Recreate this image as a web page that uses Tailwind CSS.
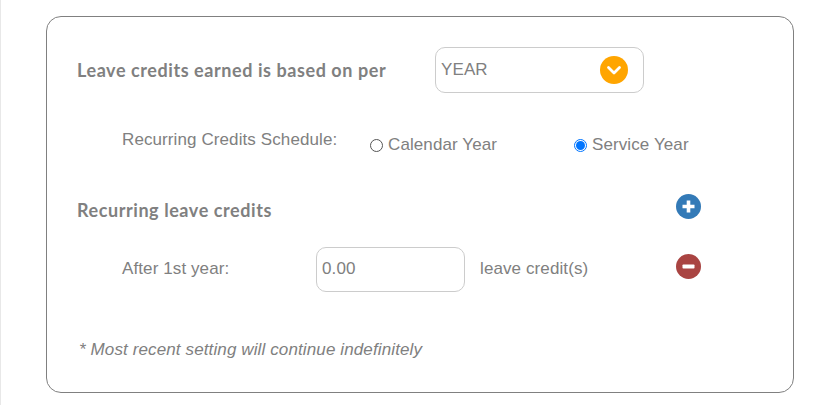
<!DOCTYPE html>
<html lang="en">
<head>
    <meta charset="UTF-8">
    <title>Leave credits</title>
    <script src="https://cdn.jsdelivr.net/npm/@tailwindcss/browser@4"></script>
</head>
<body class="bg-white h-[405px] overflow-hidden font-['Liberation_Sans',sans-serif] text-[#808080] text-[17px] tracking-[0.1px]">
    <div class="h-[405px] border-l border-[#e8e8e8] pl-[45px] pt-4">
        <div class="w-[748px] h-[377px] border border-[#808080] rounded-[15px] pl-[30px] flex flex-col">
            <!-- Base period -->
            <div class="flex items-center mt-[30px] h-[46px]">
                <h2 class="w-[358px] font-['Lato',sans-serif] font-bold text-[18px] tracking-[0.57px]">Leave credits earned is based on per</h2>
                <div class="w-[209px] h-[46px] border border-[#cccccc] rounded-[10px] pl-[5px] pr-[15px] flex items-center justify-between">
                    <span>YEAR</span>
                    <span class="w-7 h-7 rounded-full bg-[#ffa500] flex items-center justify-center">
                        <svg width="16" height="11" viewBox="0 0 16 11" fill="none" stroke="#fff" stroke-width="2.8" stroke-linecap="round" stroke-linejoin="round"><path d="M2.5 2.5 8 8l5.500-5.500"/></svg>
                    </span>
                </div>
            </div>

            <!-- Schedule -->
            <div class="flex mt-[34px] pl-[45px] h-6">
                <span class="w-[248px]">Recurring Credits Schedule:</span>
                <label class="w-[204px] flex items-center gap-[5px] mt-[8px] h-5"><span class="w-[13px] h-[13px] rounded-full border border-[#555555]"></span>Calendar Year</label>
                <label class="flex items-center gap-[5px] mt-[8px] h-5"><span class="w-[13px] h-[13px] rounded-full border border-[#0075ff] flex items-center justify-center"><span class="w-[9px] h-[9px] rounded-full bg-[#0075ff]"></span></span>Service Year</label>
            </div>

            <!-- Recurring credits header -->
            <div class="flex items-center justify-between mt-[41px] h-[28px] pr-[92px]">
                <h2 class="font-['Lato',sans-serif] font-bold text-[18px] tracking-[0.57px] mt-[9px]">Recurring leave credits</h2>
                <span class="w-[25px] h-[25px] rounded-full bg-[#337ab7] flex items-center justify-center">
                    <svg width="15" height="15" viewBox="0 0 15 15" fill="#fff"><path d="M5.7 1.5h3.6v4.2h4.2v3.6H9.3v4.2H5.7V9.3H1.5V5.7h4.2z"/></svg>
                </span>
            </div>

            <!-- After 1st year row -->
            <div class="flex items-center mt-[26px] h-[46px] pl-[45px] pr-[92px]">
                <span class="w-[194px]">After 1st year:</span>
                <div class="w-[149px] h-[45px] border border-[#cccccc] rounded-[10px] pl-[5px] flex items-center">0.00</div>
                <span class="ml-[15px]">leave credit(s)</span>
                <span class="ml-auto w-[25px] h-[25px] rounded-full bg-[#a94442] flex items-center justify-center mb-[6px]">
                    <svg width="15" height="15" viewBox="0 0 15 15" fill="#fff"><rect x="1.5" y="5.5" width="12" height="4" rx="0.8"/></svg>
                </span>
            </div>

            <p class="mt-[45px] pl-[2px] italic tracking-[0.12px]">* Most recent setting will continue indefinitely</p>
        </div>
    </div>
</body>
</html>
